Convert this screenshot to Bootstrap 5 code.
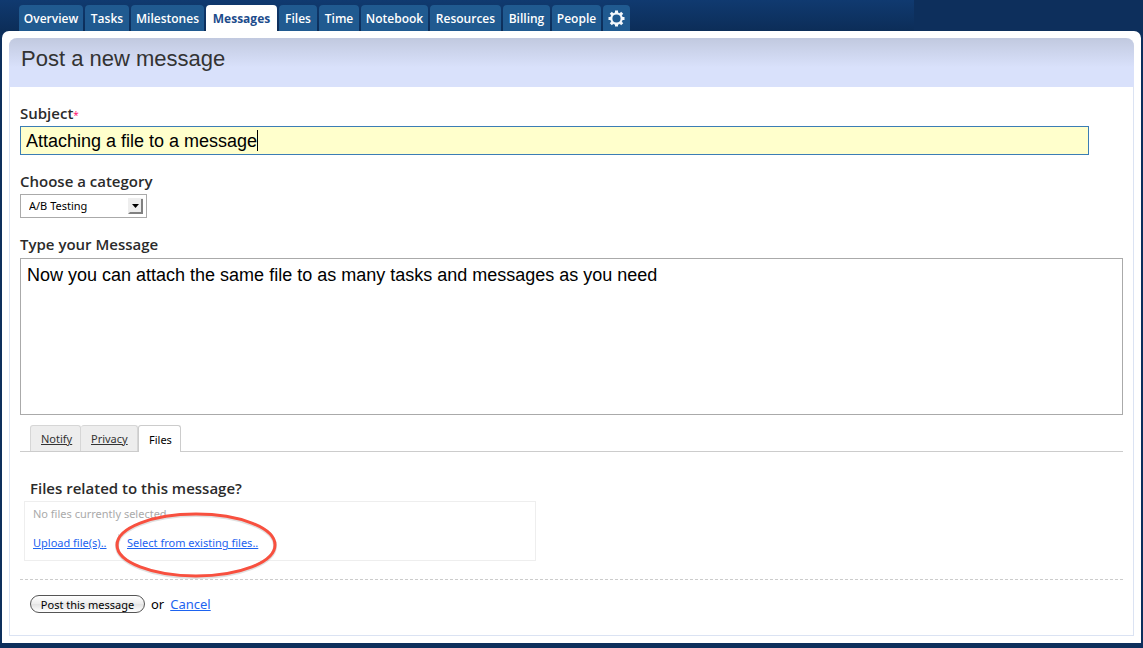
<!DOCTYPE html>
<html lang="en">
<head>
<meta charset="utf-8">
<meta name="viewport" content="width=device-width, initial-scale=1">
<title>Post a new message</title>
<link href="https://cdn.jsdelivr.net/npm/bootstrap@5.3.0/dist/css/bootstrap.min.css" rel="stylesheet">
<style>
  body { font-family: "Noto Sans", "Open Sans", sans-serif; font-size: 13px; line-height: 18px; color: #333; background: #0d2f5c; }
  a { color: #1d63f0; }
  .topbar { padding: 5px 18px 0 19px; background: linear-gradient(#103a70, #0c2d58) no-repeat 0 0 / 80% 100%; }
  .main-tabs { gap: 2px; }
  .main-tabs .nav-link { height: 26px; padding: 5px 0 3px; text-align: center; font-family: "Open Sans", sans-serif; font-size: 12px; font-weight: 600; color: #fff; background: #205a90; border-radius: 4px 4px 0 0; }
  .main-tabs .nav-link.active { font-weight: 700; color: #1d4c8c; background: #fff; }
  .tab-27 { width: 27px; }
  .tab-38 { width: 38px; }
  .tab-40 { width: 40px; }
  .tab-44 { width: 44px; }
  .tab-47 { width: 47px; }
  .tab-49 { width: 49px; }
  .tab-64 { width: 64px; }
  .tab-67 { width: 67px; }
  .tab-71 { width: 71px; }
  .tab-73 { width: 73px; }
  .shell { margin: 0 2px 5px; padding: 7px; background: #fff; border-radius: 7px 7px 0 0; }
  .panel { border: 1px solid #dbe3f3; border-top: 0; border-radius: 8px 8px 0 0; }
  .panel-head { margin: 0 -1px; padding: 8px 12px 0; height: 49px; background: linear-gradient(#c1c9df, #d9e1fb 60%); border-radius: 8px 8px 0 0; }
  .panel-head h1 { margin: 0; font: 22px/25px "Liberation Sans", sans-serif; color: #333; }
  .panel-body { padding: 18px 10px 22px; }
  .field-label, .files-title { font-family: "Open Sans", sans-serif; font-size: 15px; line-height: 16px; font-weight: 600; color: #2b2b2b; }
  .field-label { display: block; margin-bottom: 5px; }
  .star { font-size: 10px; line-height: 10px; font-weight: 400; color: #f06; }
  .subject-wrap { width: calc(100% - 34px); margin-bottom: 18px; }
  .subject-wrap input, .message { font: 18px/22px "Liberation Sans", sans-serif; color: #000; border-radius: 0; }
  .subject-wrap input { height: 29px; padding: 4px 5px 2px; background: #ffc; border-color: #3b7db5; }
  .subject-wrap input:focus { background: #ffc; box-shadow: none; }
  .caret-bar { left: 237px; top: 4px; width: 1px; height: 21px; background: #000; }
  .category { width: 127px; margin-bottom: 18px; }
  .category select { appearance: none; width: 100%; height: 24px; padding: 0 24px 0 8px; font-size: 11px; color: #000; background: #fff; border: 1px solid #aaa; border-radius: 0; }
  .category svg { right: 4px; top: 4px; pointer-events: none; }
  .message { height: 157px; margin-top: 6px; padding: 5px 6px; border-color: #aaa; resize: none; }
  .sub-tabs { margin-top: 10px; padding-left: 10px; border-bottom: 1px solid #ccc; }
  .sub-tabs .nav-link { min-width: 51px; height: 26px; padding: 4px 6px 3px 10px; font-size: 11px; color: #333; text-decoration: underline; background: #ededed; border: 1px solid #d6d6d6; border-bottom: 0; border-left-width: 0; border-radius: 3px 3px 0 0; }
  .sub-tabs .nav-item:nth-child(2) .nav-link { min-width: 57px; }
  .sub-tabs .nav-item:first-child .nav-link { border-left-width: 1px; }
  .sub-tabs .nav-link.active { min-width: 43px; height: 27px; margin-bottom: -1px; padding-top: 5px; color: #000; text-decoration: none; background: #fff; border-color: #ccc; border-left-width: 1px; }
  .files-title { margin: 28px 10px 5px; }
  .files-box { width: 512px; max-width: 100%; height: 60px; margin-left: 4px; padding: 3px 8px; font-size: 11px; border: 1px solid #eee; }
  .files-box p { margin: 0 0 11px; color: #aaa; }
  .upload-link { width: 85px; }
  .existing { padding-left: 8px; }
  .ring { left: -6px; top: -23px; pointer-events: none; }
  .actions { margin-top: 18px; padding: 15px 10px 0; border-top: 1px dashed #ccc; gap: 6px; color: #000; }
  .post-btn { width: 115px; height: 18px; padding: 0; font-size: 11px; line-height: 15px; color: #000; background: linear-gradient(#fff, #ececec 50%, #e2e2e2 51%, #fff); border: 1px solid #555; border-radius: 9px; }
</style>
</head>
<body>
<header class="topbar">
  <ul class="nav main-tabs">
    <li class="nav-item tab-64"><a class="nav-link" href="#">Overview</a></li>
    <li class="nav-item tab-44"><a class="nav-link" href="#">Tasks</a></li>
    <li class="nav-item tab-73"><a class="nav-link" href="#">Milestones</a></li>
    <li class="nav-item tab-71"><a class="nav-link active" aria-current="page" href="#">Messages</a></li>
    <li class="nav-item tab-38"><a class="nav-link" href="#">Files</a></li>
    <li class="nav-item tab-40"><a class="nav-link" href="#">Time</a></li>
    <li class="nav-item tab-67"><a class="nav-link" href="#">Notebook</a></li>
    <li class="nav-item tab-71"><a class="nav-link" href="#">Resources</a></li>
    <li class="nav-item tab-47"><a class="nav-link" href="#">Billing</a></li>
    <li class="nav-item tab-49"><a class="nav-link" href="#">People</a></li>
    <li class="nav-item tab-27"><a class="nav-link" href="#" aria-label="Settings">
      <svg class="d-block mx-auto" width="17" height="17" viewBox="-8.500 -8.500 17 17">
        <g stroke="#f4f8fc" stroke-width="3"><path d="M0-8V-5M0 5V8M-8 0H-5M5 0H8M-5.700-5.700L-4-4M4 4L5.700 5.700M5.700-5.700L4-4M-4 4L-5.700 5.700"/></g>
        <circle r="5.200" fill="none" stroke="#f4f8fc" stroke-width="2.200"/>
      </svg></a></li>
  </ul>
</header>
<main class="shell">
  <div class="panel">
    <div class="panel-head"><h1>Post a new message</h1></div>
    <form class="panel-body">
      <label class="field-label" for="subject">Subject<span class="star">*</span></label>
      <div class="subject-wrap position-relative">
        <input class="form-control" id="subject" type="text" value="Attaching a file to a message">
        <span class="caret-bar position-absolute"></span>
      </div>
      <label class="field-label" for="category">Choose a category</label>
      <div class="category position-relative">
        <select class="d-block" id="category"><option>A/B Testing</option></select>
        <svg class="position-absolute" width="15" height="16" viewBox="0 0 15 16"><path fill="#eee" d="M0 0H15V16H0z"/><path fill="#808080" d="M13 1H15V16H0L2 14H13z"/><path d="M4 6H11L7.500 10z"/></svg>
      </div>
      <label class="field-label" for="message">Type your Message</label>
      <textarea class="form-control message" id="message">Now you can attach the same file to as many tasks and messages as you need</textarea>
      <ul class="nav sub-tabs">
        <li class="nav-item"><a class="nav-link" href="#">Notify</a></li>
        <li class="nav-item"><a class="nav-link" href="#">Privacy</a></li>
        <li class="nav-item"><a class="nav-link active" href="#">Files</a></li>
      </ul>
      <h2 class="files-title">Files related to this message?</h2>
      <div class="files-box">
        <p>No files currently selected</p>
        <div class="d-flex">
          <a class="upload-link" href="#">Upload file(s)..</a>
          <span class="existing position-relative border-start"><a href="#">Select from existing files..</a>
            <svg class="ring position-absolute" width="168" height="72" viewBox="0 0 168 72" fill="none"><ellipse cx="83" cy="35" rx="79" ry="31" stroke="#000" stroke-opacity=".12" stroke-width="4"/><ellipse cx="83" cy="34" rx="79" ry="31" stroke="#f8503f" stroke-width="3"/></svg>
          </span>
        </div>
      </div>
      <div class="actions d-flex align-items-center">
        <button class="post-btn" type="submit">Post this message</button>
        <span>or</span>
        <a href="#">Cancel</a>
      </div>
    </form>
  </div>
</main>
<script src="https://cdn.jsdelivr.net/npm/bootstrap@5.3.0/dist/js/bootstrap.bundle.min.js"></script>
</body>
</html>
